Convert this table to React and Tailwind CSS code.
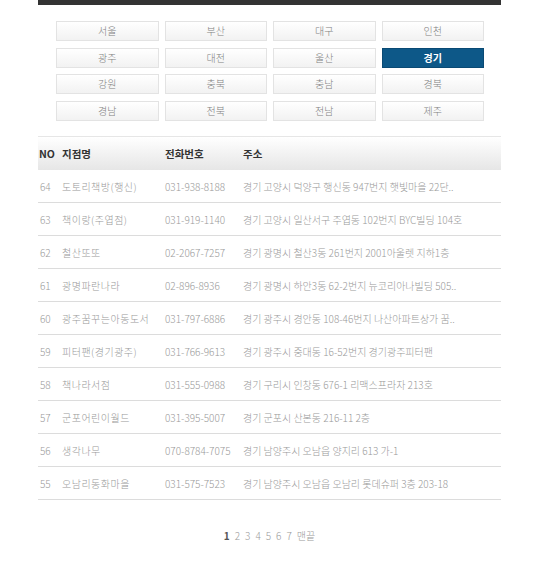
const regions = [
  "서울", "부산", "대구", "인천",
  "광주", "대전", "울산", "경기",
  "강원", "충북", "충남", "경북",
  "경남", "전북", "전남", "제주",
];

const stores = [
  { no: 64, name: "도토리책방(행신)", tel: "031-938-8188", addr: "경기 고양시 덕양구 행신동 947번지 햇빛마을 22단.." },
  { no: 63, name: "책이랑(주엽점)", tel: "031-919-1140", addr: "경기 고양시 일산서구 주엽동 102번지 BYC빌딩 104호" },
  { no: 62, name: "철산또또", tel: "02-2067-7257", addr: "경기 광명시 철산3동 261번지 2001아울렛 지하1층" },
  { no: 61, name: "광명파란나라", tel: "02-896-8936", addr: "경기 광명시 하안3동 62-2번지 뉴코리아나빌딩 505.." },
  { no: 60, name: "광주꿈꾸는아동도서", tel: "031-797-6886", addr: "경기 광주시 경안동 108-46번지 나산아파트상가 꿈.." },
  { no: 59, name: "피터팬(경기광주)", tel: "031-766-9613", addr: "경기 광주시 중대동 16-52번지 경기광주피터팬" },
  { no: 58, name: "책나라서점", tel: "031-555-0988", addr: "경기 구리시 인창동 676-1 리맥스프라자 213호" },
  { no: 57, name: "군포어린이월드", tel: "031-395-5007", addr: "경기 군포시 산본동 216-11 2층" },
  { no: 56, name: "생각나무", tel: "070-8784-7075", addr: "경기 남양주시 오남읍 양지리 613 가-1" },
  { no: 55, name: "오남리동화마을", tel: "031-575-7523", addr: "경기 남양주시 오남읍 오남리 롯데슈퍼 3층 203-18" },
];

export default function App() {
  return (
    <div className="w-[550px] h-[570px] bg-white font-['Noto_Sans_CJK_KR',sans-serif] text-[10px] font-light">
      <div className="ml-[38px] w-[463px]">
        <div className="h-[5px] bg-[#333]" />

        <div className="mt-[16px] ml-[18px] w-[428px] grid grid-cols-4 gap-x-[6px] gap-y-[6.5px]">
          {regions.map((r) => {
            const active = r === "경기";
            return (
              <div
                key={r}
                className={`h-[20px] flex items-center justify-center leading-none ${active
                    ? "bg-[#0d5888] border border-[#0a4a74] text-white font-bold"
                    : "bg-gradient-to-b from-white to-[#f2f2f2] border border-[#e3e3e3] text-[#808080]"
                  }`}
              >
                {r}
              </div>
            );
          })}
        </div>

        <div className="mt-[15.5px]">
          <div className="h-[34px] flex items-center border-t border-[#e6e6e6] bg-gradient-to-b from-white to-[#e6e6e6] font-bold text-[#333] text-[10.5px]">
            <div className="w-[24px] pl-[1px]">NO</div>
            <div className="w-[103px]">지점명</div>
            <div className="w-[78px]">전화번호</div>
            <div>주소</div>
          </div>
          {stores.map((s) => (
            <div key={s.no} className="h-[33px] flex items-center border-b border-[#dcdcdc] text-[#999] whitespace-nowrap">
              <div className="w-[24px] pl-[2px]">{s.no}</div>
              <div className="w-[103px] tracking-[0.5px]">{s.name}</div>
              <div className="w-[78px]">{s.tel}</div>
              <div>{s.addr}</div>
            </div>
          ))}
        </div>

        <div className="mt-[31px] flex justify-center gap-[5px] text-[#999] text-[10px] leading-none">
          <span className="font-bold text-[#555]">1</span>
          <span>2</span>
          <span>3</span>
          <span>4</span>
          <span>5</span>
          <span>6</span>
          <span>7</span>
          <span>맨끝</span>
        </div>
      </div>
    </div>
  );
}
